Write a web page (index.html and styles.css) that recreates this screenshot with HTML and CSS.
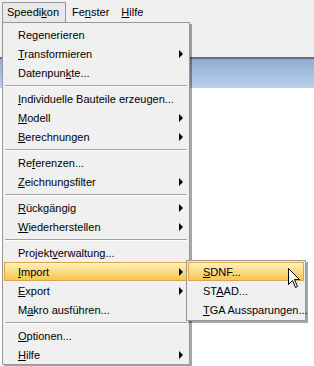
FILE: index.html
```html
<!DOCTYPE html>
<html lang="de">
<head>
    <meta charset="UTF-8">
    <title>Speedikon Menü</title>
    <link rel="stylesheet" href="styles.css">
</head>
<body>
    <div class="menubar">
        <span class="top-item active">Speedi<u>k</u>on</span>
        <span class="top-item">Fe<u>n</u>ster</span>
        <span class="top-item"><u>H</u>ilfe</span>
    </div>
    <div class="toolbar"></div>
    <div class="band"></div>
    <div class="canvas"></div>

    <div class="menu main-menu">
        <div class="item">Re<u>g</u>enerieren</div>
        <div class="item sub"><u>T</u>ransformieren</div>
        <div class="item">Datenpun<u>k</u>te...</div>
        <div class="sep"></div>
        <div class="item"><u>I</u>ndividuelle Bauteile erzeugen...</div>
        <div class="item sub"><u>M</u>odell</div>
        <div class="item sub"><u>B</u>erechnungen</div>
        <div class="sep"></div>
        <div class="item">Re<u>f</u>erenzen...</div>
        <div class="item sub"><u>Z</u>eichnungsfilter</div>
        <div class="sep"></div>
        <div class="item sub"><u>R</u>ückgängig</div>
        <div class="item sub"><u>W</u>iederherstellen</div>
        <div class="sep"></div>
        <div class="item">Projekt<u>v</u>erwaltung...</div>
        <div class="item sub hot"><u>I</u>mport</div>
        <div class="item sub"><u>E</u>xport</div>
        <div class="item">M<u>a</u>kro ausführen...</div>
        <div class="sep"></div>
        <div class="item"><u>O</u>ptionen...</div>
        <div class="item sub"><u>H</u>ilfe</div>
    </div>

    <div class="menu sub-menu">
        <div class="item hot"><u>S</u>DNF...</div>
        <div class="item">ST<u>A</u>AD...</div>
        <div class="item"><u>T</u>GA Aussparungen...</div>
    </div>

    <svg class="cursor" width="13" height="21" viewBox="0 0 13 21">
        <path d="M0.5 0.5 L0.5 16.5 L4.5 12.5 L7.5 19.5 L9.5 18.5 L6.5 11.5 L11.5 11.5 Z" fill="#fff" stroke="#000" stroke-width="1"/>
    </svg>
</body>
</html>
```

FILE: styles.css
```css
body {
    margin: 0;
    width: 314px;
    height: 366px;
    overflow: hidden;
    background: #f0f0f0;
    font-family: "Liberation Sans", Arial, sans-serif;
    font-size: 11px;
    color: black;
}

.menubar {
    display: flex;
    height: 22px;
    padding: 2px 0 0 2px;
    box-sizing: border-box;
}

.top-item {
    padding: 2px 6px 0;
    line-height: 17px;
}

.active {
    background: #e8e8e8;
    border: 1px solid #9a9a9a;
    border-bottom: none;
    padding: 1px 6px 0 4px;
}

.toolbar {
    height: 35px;
    border-bottom: 2px solid #6f6f6f;
}

.band {
    height: 29px;
    background: linear-gradient(#8eadd2, #b9d2ec);
}

.canvas {
    height: 278px;
    background: white;
}

.menu {
    position: absolute;
    background: #f0f0f0;
    border: 1px solid #979797;
    box-shadow: 2px 2px 0 rgba(0, 0, 0, 0.35);
}

.main-menu {
    left: 2px;
    top: 22px;
    width: 184px;
    padding: 2px 1px 0;
}

.sub-menu {
    left: 186px;
    top: 260px;
    width: 116px;
    padding: 1px 1px;
}

.item {
    position: relative;
    height: 19px;
    line-height: 20px;
    padding-left: 14px;
    box-sizing: border-box;
    white-space: nowrap;
}

.sub-menu .item {
    padding-left: 15px;
}

.sub::after {
    content: "";
    position: absolute;
    right: 5px;
    top: 6px;
    border-top: 4px solid transparent;
    border-bottom: 4px solid transparent;
    border-left: 4px solid black;
}

.hot {
    background: linear-gradient(#fff3c6, #fddc87 45%, #f9c554);
    border: 1px solid #dca542;
    line-height: 18px;
    padding-left: 13px;
}

.sub-menu .hot {
    padding-left: 14px;
}

.hot.sub::after {
    right: 4px;
    top: 5px;
}

.sep {
    height: 7px;
    position: relative;
}

.sep::before {
    content: "";
    position: absolute;
    left: 1px;
    right: 1px;
    top: 3px;
    height: 1px;
    background: #a0a0a0;
    border-bottom: 1px solid #ffffff;
}

.cursor {
    position: absolute;
    left: 288px;
    top: 268px;
}
```
